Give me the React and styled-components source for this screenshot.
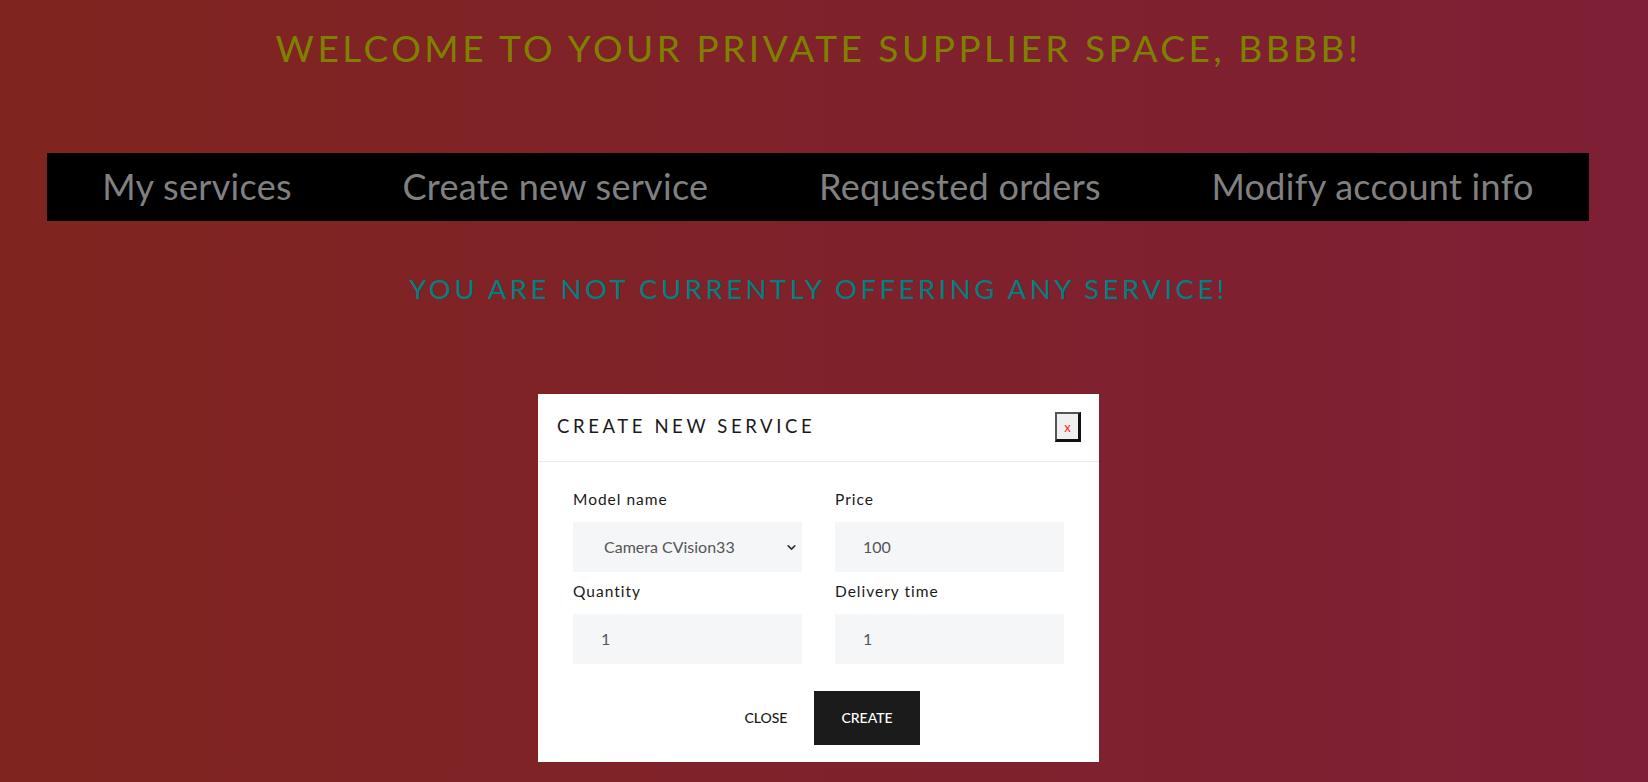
import React from 'react';
import styled, { createGlobalStyle } from 'styled-components';
import { ChevronDown } from 'lucide-react';

const GlobalStyle = createGlobalStyle`
    html, body {
        margin: 0;
        padding: 0;
    }
    body {
        font-family: Lato, "Noto Sans", sans-serif;
        background: linear-gradient(to right, #80241f, #7f1f36);
        min-height: 100vh;
        overflow: hidden;
    }
`;

const navItems = ['My services', 'Create new service', 'Requested orders', 'Modify account info'];

export default function App() {
    return (
        <>
            <GlobalStyle />
            <Page>
                <Welcome>Welcome to your private supplier space, bbbb!</Welcome>
                <Nav>
                    {navItems.map((item) => (
                        <NavLink key={item}>{item}</NavLink>
                    ))}
                </Nav>
                <Empty>You are not currently offering any service!</Empty>

                <Modal>
                    <ModalHeader>
                        <ModalTitle>Create new service</ModalTitle>
                        <CloseX>x</CloseX>
                    </ModalHeader>
                    <ModalBody>
                        <Field>
                            <Label>Model name</Label>
                            <SelectWrap>
                                <Select defaultValue="cv33">
                                    <option value="cv33">Camera CVision33</option>
                                </Select>
                                <Chevron size={13} strokeWidth={3} />
                            </SelectWrap>
                        </Field>
                        <Field>
                            <Label>Price</Label>
                            <Input defaultValue="100" />
                        </Field>
                        <Field>
                            <Label>Quantity</Label>
                            <Input defaultValue="1" />
                        </Field>
                        <Field>
                            <Label>Delivery time</Label>
                            <Input defaultValue="1" />
                        </Field>
                    </ModalBody>
                    <ModalFooter>
                        <FooterButton>Close</FooterButton>
                        <FooterButton primary>Create</FooterButton>
                    </ModalFooter>
                </Modal>
            </Page>
        </>
    );
}

const Page = styled.div`
    width: 1637px;
    padding-top: 29px;
`;

const Welcome = styled.h1`
    margin: 0;
    font-size: 37px;
    line-height: 1;
    font-weight: 400;
    text-transform: uppercase;
    letter-spacing: 3.5px;
    color: #808000;
    text-align: center;
`;

const Nav = styled.nav`
    margin: 87px 0 0 47px;
    width: 1542px;
    height: 68px;
    background: #000;
    display: flex;
    align-items: center;
    justify-content: space-around;
`;

const NavLink = styled.a`
    font-size: 36px;
    line-height: 1;
    letter-spacing: 0.3px;
    color: #808080;
    cursor: pointer;
    margin-top: -3px;
`;

const Empty = styled.h2`
    margin: 54px 0 0;
    font-size: 27.5px;
    line-height: 1;
    font-weight: 400;
    text-transform: uppercase;
    letter-spacing: 3.5px;
    color: #008080;
    text-align: center;
`;

const Modal = styled.div`
    margin: 91px auto 0;
    width: 561px;
    background: #fff;
    box-sizing: border-box;
`;

const ModalHeader = styled.div`
    height: 67px;
    padding: 0 18px 0 19px;
    border-bottom: 1px solid #e9ecef;
    display: flex;
    align-items: center;
    justify-content: space-between;
`;

const ModalTitle = styled.h5`
    margin: 0;
    font-size: 18.5px;
    font-weight: 400;
    text-transform: uppercase;
    letter-spacing: 3.6px;
    color: #1a1a1a;
    margin-top: -2px;
`;

const CloseX = styled.button`
    width: 26px;
    height: 30px;
    padding: 0;
    background: #efefef;
    border-style: solid;
    border-width: 2px 3px 3px 2px;
    border-color: #555 #111 #111 #555;
    color: #ff2020;
    font-family: Lato, sans-serif;
    font-size: 13px;
    cursor: pointer;
`;

const ModalBody = styled.div`
    padding: 26px 35px 0;
    display: grid;
    grid-template-columns: 1fr 1fr;
    column-gap: 33px;
    row-gap: 8px;
`;

const Field = styled.div`
    display: flex;
    flex-direction: column;
`;

const Label = styled.label`
    font-size: 15.5px;
    line-height: 22px;
    letter-spacing: 1px;
    color: #1a1a1a;
    margin-bottom: 12px;
`;

const fieldStyle = `
    height: 50px;
    width: 100%;
    box-sizing: border-box;
    border: none;
    background: #f5f6f8;
    font-family: Lato, "Noto Sans", sans-serif;
    font-size: 16px;
    color: #555;
    outline: none;
`;

const Input = styled.input`
    ${fieldStyle}
    padding: 0 28px;
`;

const SelectWrap = styled.div`
    position: relative;
`;

const Select = styled.select`
    ${fieldStyle}
    appearance: none;
    padding: 0 28px 0 31px;
`;

const Chevron = styled(ChevronDown)`
    position: absolute;
    right: 4px;
    top: 19px;
    color: #333;
    pointer-events: none;
`;

const ModalFooter = styled.div`
    padding: 27px 0 17px;
    display: flex;
    justify-content: center;
`;

const FooterButton = styled.button`
    height: 54px;
    padding: 0 27px;
    border: none;
    background: ${(props) => (props.primary ? '#1b1b1b' : 'transparent')};
    color: ${(props) => (props.primary ? '#fff' : '#1a1a1a')};
    font-family: Lato, sans-serif;
    font-size: 14px;
    font-weight: 500;
    text-transform: uppercase;
    cursor: pointer;
`;
